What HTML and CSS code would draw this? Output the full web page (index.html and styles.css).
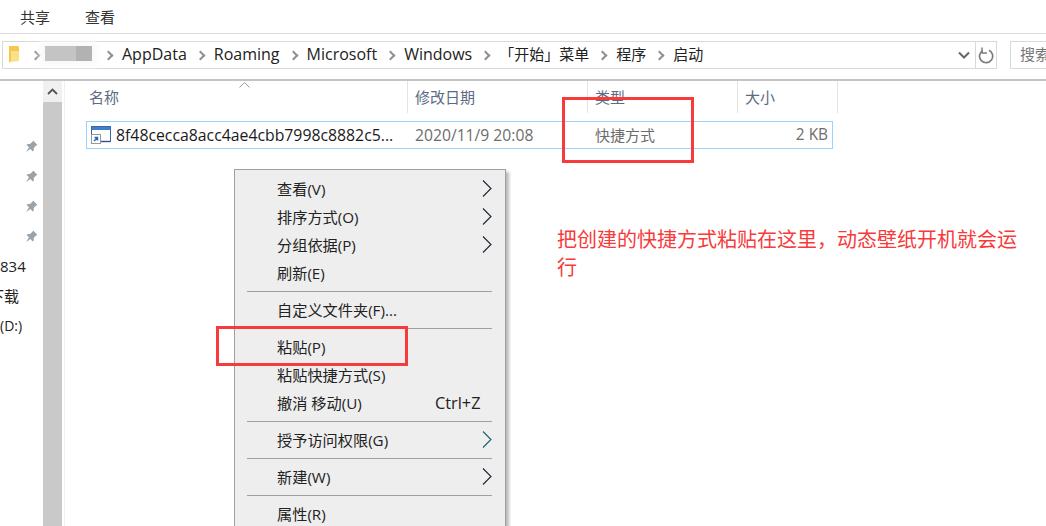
FILE: index.html
```html
<!DOCTYPE html>
<html lang="zh">
<head>
<meta charset="utf-8">
<title>启动</title>
<link rel="stylesheet" href="styles.css">
</head>
<body>
<svg class="defs" width="0" height="0">
  <symbol id="pin" viewBox="0 0 12 12"><path d="M7.500 .5l4 4-1.200.6-2.300 2.300.2 2.100-1 1-2.200-2.300L1 11l2.700-4.200-2.200-2.200 1-1 2.100.2 2.300-2.300z" fill="#9aa3aa"/></symbol>
  <symbol id="arrow" viewBox="0 0 10 17"><path d="M1 .5l8 8-8 8" fill="none" stroke="currentColor" stroke-width="1.100"/></symbol>
</svg>
<div class="window">
  <div class="ribbon"><span class="tab">共享</span><span class="tab">查看</span></div>
  <div class="addressrow">
    <div class="address">
      <svg class="folder" width="13" height="18" viewBox="0 0 13 18"><path d="M1 0h9l1 1v14H3l-2 2z" fill="#f5c84c"/><path d="M3 16V5h8v10z" fill="#fbe08a"/></svg>
      <span class="chev first"></span>
      <span class="blur"><i></i><i></i><i class="dark"></i></span>
      <span class="chev"></span><span class="crumb">AppData</span>
      <span class="chev"></span><span class="crumb">Roaming</span>
      <span class="chev"></span><span class="crumb">Microsoft</span>
      <span class="chev"></span><span class="crumb">Windows</span>
      <span class="chev"></span><span class="crumb cjk">「开始」菜单</span>
      <span class="chev"></span><span class="crumb cjk">程序</span>
      <span class="chev"></span><span class="crumb cjk">启动</span>
      <span class="spacer"></span>
      <svg class="drop" width="12" height="8" viewBox="0 0 12 8"><path d="M1 1.500l5 5 5-5" fill="none" stroke="#666" stroke-width="2"/></svg>
      <span class="refresh">
        <svg width="16" height="17" viewBox="0 0 16 17"><path d="M4.500 3.600A6.600 6.600 0 1 0 11 3.200" fill="none" stroke="#7d7d7d" stroke-width="1.700"/><path d="M4 .5v5.400h5" fill="none" stroke="#7d7d7d" stroke-width="1.500"/></svg>
      </span>
    </div>
    <div class="search">搜索</div>
  </div>
  <div class="main">
    <nav class="sidebar">
      <div class="pin-list">
        <svg class="pin"><use href="#pin"/></svg>
        <svg class="pin"><use href="#pin"/></svg>
        <svg class="pin"><use href="#pin"/></svg>
        <svg class="pin"><use href="#pin"/></svg>
      </div>
      <div class="navitem num">834</div>
      <div class="navitem dl">下载</div>
      <div class="navitem drive">(D:)</div>
    </nav>
    <div class="scrollbar">
      <div class="arrow"><svg width="11" height="7" viewBox="0 0 11 7"><path d="M1 6l4.500-4.500L10 6" fill="none" stroke="#555" stroke-width="1.800"/></svg></div>
      <div class="thumb"></div>
    </div>
    <section class="files">
      <div class="head">
        <div class="col h-name">名称<svg class="sort" width="11" height="6" viewBox="0 0 11 6"><path d="M.5 5.500l5-5 5 5" fill="none" stroke="#9a9a9a"/></svg></div>
        <div class="col h-date">修改日期</div>
        <div class="col h-type">类型</div>
        <div class="col h-size">大小</div>
      </div>
      <div class="row">
        <div class="cell name">
          <svg class="fileicon" width="20" height="18" viewBox="0 0 20 18"><rect x=".5" y=".5" width="19" height="15" fill="#fff" stroke="#3f66a3"/><rect x="1" y="1" width="18" height="3" fill="#3f7fd0"/><path d="M9 15.500h10" stroke="#2f4f8f" stroke-width="1.400"/><rect x=".5" y="8.500" width="9" height="9" fill="#fff" stroke="#999"/><path d="M3 15l3-3M3.500 11.500h3v3" fill="none" stroke="#2a66b5" stroke-width="1.400"/></svg>
          8f48cecca8acc4ae4cbb7998c8882c5...
        </div>
        <div class="cell date">2020/11/9 20:08</div>
        <div class="cell type">快捷方式</div>
        <div class="cell size">2 KB</div>
      </div>
    </section>
  </div>
</div>

<div class="menu">
  <div class="mi">查看(V)<svg class="sub"><use href="#arrow"/></svg></div>
  <div class="mi">排序方式(O)<svg class="sub"><use href="#arrow"/></svg></div>
  <div class="mi">分组依据(P)<svg class="sub"><use href="#arrow"/></svg></div>
  <div class="mi">刷新(E)</div>
  <div class="sep"></div>
  <div class="mi">自定义文件夹(F)...</div>
  <div class="sep"></div>
  <div class="mi">粘贴(P)</div>
  <div class="mi">粘贴快捷方式(S)</div>
  <div class="mi">撤消 移动(U)<span class="key">Ctrl+Z</span></div>
  <div class="sep"></div>
  <div class="mi">授予访问权限(G)<svg class="sub teal"><use href="#arrow"/></svg></div>
  <div class="sep"></div>
  <div class="mi">新建(W)<svg class="sub"><use href="#arrow"/></svg></div>
  <div class="sep"></div>
  <div class="mi">属性(R)</div>
</div>

<div class="redbox box-type"></div>
<div class="redbox box-paste"></div>
<p class="note">把创建的快捷方式粘贴在这里，动态壁纸开机就会运行</p>
</body>
</html>
```
FILE: styles.css
```css
* { box-sizing: border-box; }
html, body { margin: 0; height: 100%; overflow: hidden; background: #fff; }
body {
  position: relative;
  font-family: "Open Sans", "Noto Sans CJK SC", sans-serif;
  font-size: 15px;
  color: #222;
}
.defs { position: absolute; }
.window { display: flex; flex-direction: column; height: 526px; }

.ribbon {
  display: flex;
  height: 34px;
  padding: 0 0 0 20px;
  gap: 35px;
  align-items: center;
  border-bottom: 1px solid #dcdcdc;
  flex: none;
}
.tab { font-size: 15px; line-height: 34px; color: #333; }

.addressrow {
  display: flex;
  height: 47px;
  flex: none;
  padding: 7px 0 0 2px;
  gap: 13px;
  border-bottom: 2px solid #c4c4c4;
  align-items: flex-start;
}
.address {
  display: flex;
  align-items: center;
  width: 995px;
  height: 28px;
  border: 1px solid #d9d9d9;
  flex: none;
  padding-left: 5px;
}
.folder { flex: none; margin: 0 11px 0 0; }
.chev {
  flex: none;
  width: 7px;
  height: 7px;
  border-top: 2px solid #8f8f8f;
  border-right: 2px solid #8f8f8f;
  transform: rotate(45deg);
  margin: 0 10px;
}
.chev.first { margin: 0 6px 0 0; }
.blur {
  display: flex;
  width: 47px;
  height: 15px;
  margin: 0 3px 4px 0;
  flex: none;
  filter: blur(.5px);
  box-shadow: 0 0 7px 5px #f9f9f9;
}
.blur i { flex: 1; background: #c4c4c4; }
.blur i.dark { background: #b2b2b2; }
.crumb { font-size: 16px; line-height: 22px; padding-bottom: 3px; white-space: nowrap; color: #222; }
.crumb.cjk { font-size: 15px; }
.spacer { flex: 1; }
.drop { flex: none; margin-right: 5px; }
.refresh {
  flex: none;
  width: 21px;
  height: 26px;
  border-left: 1px solid #d9d9d9;
  display: flex;
  align-items: center;
  justify-content: center;
}
.search {
  flex: 1;
  height: 28px;
  border: 1px solid #d9d9d9;
  border-right: 0;
  padding-left: 9px;
  font-size: 15px;
  line-height: 25px;
  color: #777;
  white-space: nowrap;
  overflow: hidden;
}

.main { display: flex; flex: 1; min-height: 0; }
.sidebar { width: 43px; flex: none; padding-top: 59px; display: flex; flex-direction: column; }
.pin-list { display: flex; flex-direction: column; gap: 17px; align-items: flex-end; padding-right: 5px; margin-bottom: 8px; }
.pin { width: 13px; height: 13px; display: block; }
.navitem { line-height: 30px; white-space: nowrap; color: #222; overflow: hidden; width: 43px; }
.num { font-size: 15px; }
.dl { font-size: 15px; text-indent: -11px; }
.drive { font-size: 14px; }
.scrollbar { width: 19px; flex: none; display: flex; flex-direction: column; background: #f0f0f0; }
.arrow { height: 21px; flex: none; display: flex; align-items: center; justify-content: center; }
.thumb { flex: 1; background: #c9c9c9; }

.files { flex: 1; margin-left: 2px; border-left: 1px solid #efefef; padding-left: 19px; min-width: 0; }
.head { display: flex; height: 32px; color: #5a6b82; font-size: 15px; }
.col { position: relative; flex: none; line-height: 32px; border-right: 1px solid #e3e3e3; padding-left: 7px; white-space: nowrap; }
.sort { position: absolute; left: 155px; top: 1px; }
.h-name { width: 324px; padding-left: 5px; }
.h-date { width: 180px; }
.h-type { width: 150px; }
.h-size { width: 100px; }
.row {
  display: flex;
  align-items: center;
  width: 747px;
  height: 28px;
  margin: 8px 0 0 2px;
  border: 1px solid #99d1ff;
  white-space: nowrap;
}
.cell { line-height: 26px; flex: none; color: #6d6d6d; padding-left: 6px; }
.name { width: 322px; display: flex; align-items: center; gap: 5px; padding-left: 4px; font-size: 15.800px; color: #1a1a1a; }
.fileicon { flex: none; }
.date { width: 180px; font-size: 15.700px; }
.type { width: 150px; font-size: 15px; }
.size { width: 92px; font-size: 15.400px; text-align: right; padding-right: 3px; }

.menu {
  position: absolute;
  left: 234px;
  top: 169px;
  width: 272px;
  height: 380px;
  padding: 5px 13px 0 12px;
  background: #eeeeee;
  border: 1px solid #a0a0a0;
  box-shadow: 3px 3px 3px rgba(0,0,0,.28);
}
.mi { position: relative; height: 28px; line-height: 28px; padding-left: 30px; font-size: 15.200px; color: #222; white-space: nowrap; }
.sep { height: 9px; padding-top: 4px; }
.sep::before { content: ""; display: block; height: 1px; background: #a0a0a0; }
.sub {
  position: absolute;
  right: 0;
  top: 5px;
  width: 10px;
  height: 17px;
  color: #1b2530;
}
.sub.teal { color: #14606e; }
.key { position: absolute; left: 188px; font-size: 16.300px; }

.redbox { position: absolute; border: 3px solid #f73a3a; pointer-events: none; }
.box-type { left: 562px; top: 97px; width: 132px; height: 66px; }
.box-paste { left: 216px; top: 326px; width: 192px; height: 40px; }
.note {
  position: absolute;
  left: 557px;
  top: 225px;
  width: 465px;
  margin: 0;
  font-size: 20px;
  line-height: 28px;
  color: #f73a3a;
  font-family: "Noto Sans CJK SC", sans-serif;
}
```
